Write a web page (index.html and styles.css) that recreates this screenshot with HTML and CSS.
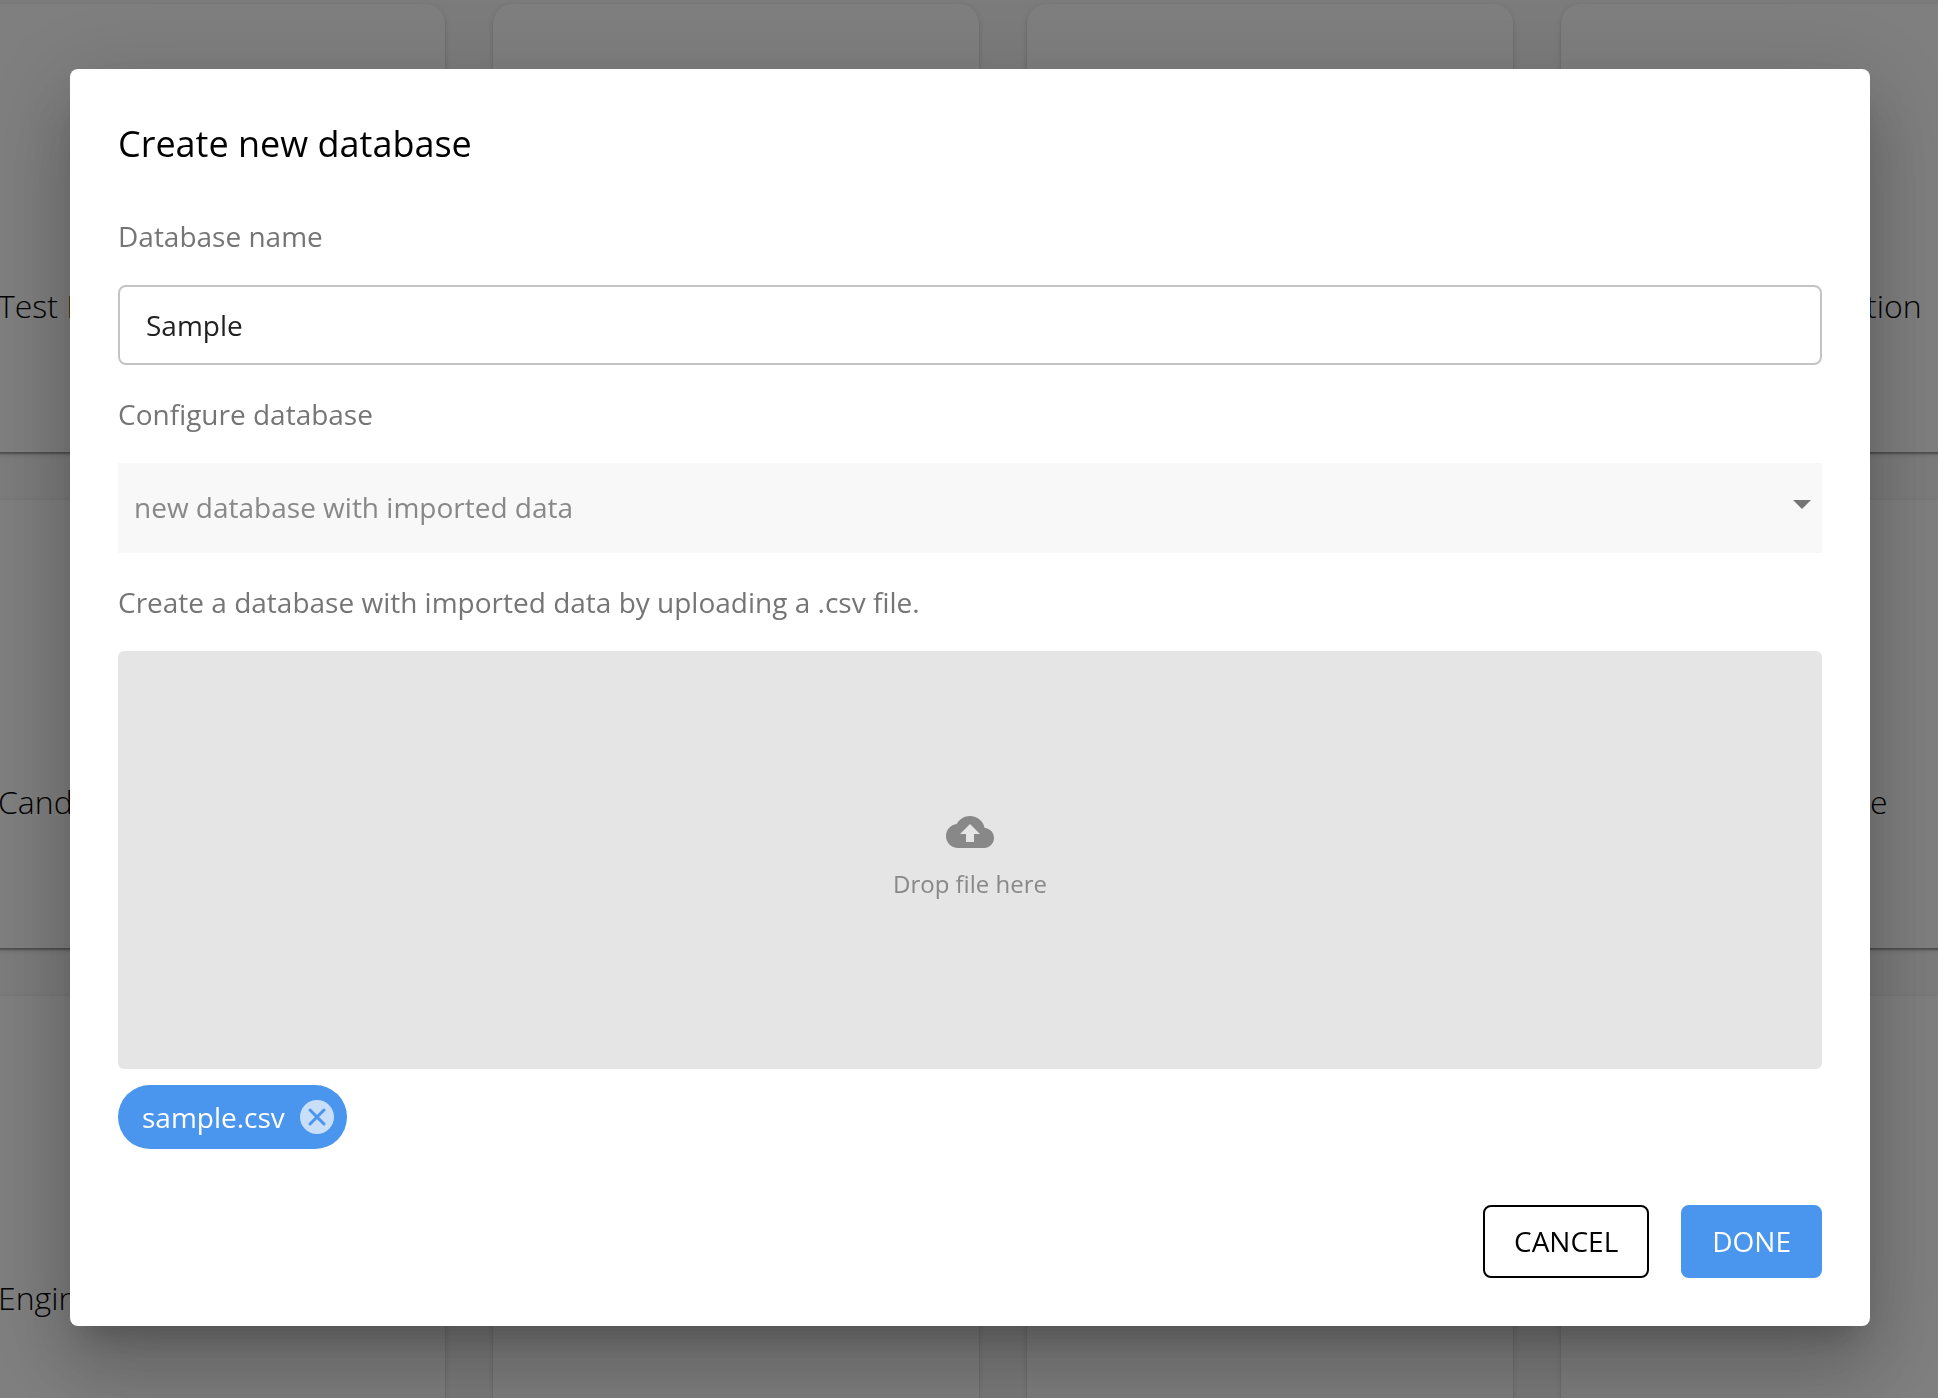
FILE: index.html
```html
<!DOCTYPE html>
<html lang="en">
<head>
  <meta charset="utf-8">
  <meta name="viewport" content="width=device-width, initial-scale=1">
  <title>Create new database</title>
  <link rel="stylesheet" href="styles.css">
</head>
<body>
  <main class="page" aria-hidden="true">
    <div class="card-grid">
      <article class="card"><h2 class="card-title">Test Database</h2></article>
      <article class="card"></article>
      <article class="card"></article>
      <article class="card"><h2 class="card-title">Expert documentation</h2></article>
      <article class="card"><h2 class="card-title">Candidates</h2></article>
      <article class="card"></article>
      <article class="card"></article>
      <article class="card"><h2 class="card-title">Vendors experience</h2></article>
      <article class="card"><h2 class="card-title">Engineering</h2></article>
      <article class="card"></article>
      <article class="card"></article>
      <article class="card"></article>
    </div>
  </main>

  <div class="backdrop">
    <form class="dialog" role="dialog" aria-modal="true" aria-labelledby="dialog-title">
      <h1 class="dialog-title" id="dialog-title">Create new database</h1>

      <label class="label" for="db-name">Database name</label>
      <input class="text-input" id="db-name" type="text" value="Sample">

      <label class="label" for="db-config">Configure database</label>
      <div class="select-wrap">
        <select class="select" id="db-config">
          <option selected>new database with imported data</option>
        </select>
        <svg class="select-arrow" viewBox="0 0 18 9" aria-hidden="true"><path d="M0 0h18L9 9z"/></svg>
      </div>

      <p class="label">Create a database with imported data by uploading a .csv file.</p>
      <label class="dropzone" for="db-file">
        <input class="file-input" id="db-file" type="file" accept=".csv">
        <svg class="upload-icon" viewBox="0 0 24 24" aria-hidden="true"><path d="M19.35 10.04C18.67 6.59 15.64 4 12 4 9.11 4 6.6 5.64 5.35 8.04 2.34 8.36 0 10.91 0 14c0 3.31 2.69 6 6 6h13c2.76 0 5-2.24 5-5 0-2.64-2.05-4.78-4.65-4.96zM14 13v4h-4v-4H7l5-5 5 5h-3z"/></svg>
        <span>Drop file here</span>
      </label>

      <div class="chip">
        <span>sample.csv</span>
        <button class="chip-remove" type="button" aria-label="Remove sample.csv">
          <svg class="remove-icon" viewBox="0 0 40 40" aria-hidden="true"><circle cx="20" cy="20" r="17"/><path d="M13 13l14 14M27 13L13 27"/></svg>
        </button>
      </div>

      <div class="actions">
        <button class="button button-outlined" type="button">CANCEL</button>
        <button class="button button-primary" type="submit">DONE</button>
      </div>
    </form>
  </div>
</body>
</html>
```
FILE: styles.css
```css
* {
  box-sizing: border-box;
}

body {
  margin: 0;
  background: #f8f8f8;
  color: #000;
  font-family: "Open Sans", "Noto Sans", sans-serif;
  font-size: 28px;
  line-height: 40px;
}

/* Card list behind the dialog, scrolled past the window's edges */
.page {
  height: 100vh;
  overflow: hidden;
}

.card-grid {
  display: grid;
  grid-template-columns: repeat(4, minmax(0, 1fr));
  grid-auto-rows: 448px;
  gap: 48px;
  margin: 4px -109px 0 -41px;
}

.card {
  padding: 282px 39px 0;
  border-radius: 20px;
  background: #fff;
  box-shadow: 0 4px 2px -2px rgba(0, 0, 0, 0.2), 0 2px 2px rgba(0, 0, 0, 0.14), 0 2px 6px rgba(0, 0, 0, 0.12);
}

.card-title {
  margin: 0;
  font-size: 32px;
  font-weight: 300;
  white-space: nowrap;
}

.backdrop {
  position: fixed;
  inset: 0;
  padding: 69px 68px 72px 70px;
  overflow: hidden;
  background: rgba(0, 0, 0, 0.5);
}

.dialog {
  display: flex;
  flex-direction: column;
  padding: 48px;
  border-radius: 8px;
  background: #fff;
  box-shadow: 0 22px 30px -14px rgba(0, 0, 0, 0.2), 0 48px 76px 6px rgba(0, 0, 0, 0.14), 0 18px 92px 16px rgba(0, 0, 0, 0.12);
}

.dialog-title {
  margin: 0 0 36px;
  font-size: 36px;
  font-weight: 400;
  line-height: 54px;
}

.label {
  margin: 0;
  padding: 9px 0 29px;
  color: #757575;
}

.text-input,
.select,
.button {
  font: inherit;
}

.text-input {
  height: 80px;
  margin-bottom: 20px;
  padding: 0 26px;
  border: 2px solid #c4c4c4;
  border-radius: 8px;
  background: #fff;
  color: #212121;
}

.select-wrap {
  display: grid;
  align-items: center;
  margin-bottom: 20px;
}

.select {
  grid-area: 1 / 1;
  height: 90px;
  padding: 0 48px 2px 16px;
  border: 0;
  border-radius: 0;
  appearance: none;
  background: #f8f8f8;
  color: #888;
}

.select-arrow {
  grid-area: 1 / 1;
  justify-self: end;
  width: 18px;
  height: 9px;
  margin: 0 11px 8px 0;
  fill: #757575;
  pointer-events: none;
}

.dropzone {
  display: flex;
  flex-direction: column;
  align-items: center;
  justify-content: center;
  gap: 8px;
  height: 418px;
  margin-bottom: 16px;
  padding-bottom: 8px;
  border-radius: 6px;
  background: #e5e5e5;
  color: #888;
  font-size: 24px;
}

.file-input {
  position: absolute;
  width: 1px;
  height: 1px;
  opacity: 0;
}

.upload-icon {
  width: 48px;
  height: 48px;
  fill: #888;
}

.chip {
  display: flex;
  align-items: center;
  align-self: flex-start;
  gap: 12px;
  height: 64px;
  margin-bottom: 56px;
  padding: 0 10px 0 24px;
  border-radius: 32px;
  background: #4a95ee;
  color: #fff;
}

.chip-remove {
  display: flex;
  padding: 0;
  border: 0;
  background: none;
}

.remove-icon {
  width: 40px;
  height: 40px;
  fill: #c9dff9;
  stroke: none;
}

.remove-icon path {
  stroke: #4a95ee;
  stroke-width: 3;
  stroke-linecap: round;
}

.actions {
  display: flex;
  justify-content: flex-end;
  gap: 32px;
}

.button {
  height: 73px;
  padding: 0 29px 2px;
  border: 2px solid transparent;
  border-radius: 8px;
}

.button-outlined {
  border-color: #000;
  background: #fff;
  color: #000;
}

.button-primary {
  border-color: #4a95ee;
  background: #4a95ee;
  color: #fff;
}
```
